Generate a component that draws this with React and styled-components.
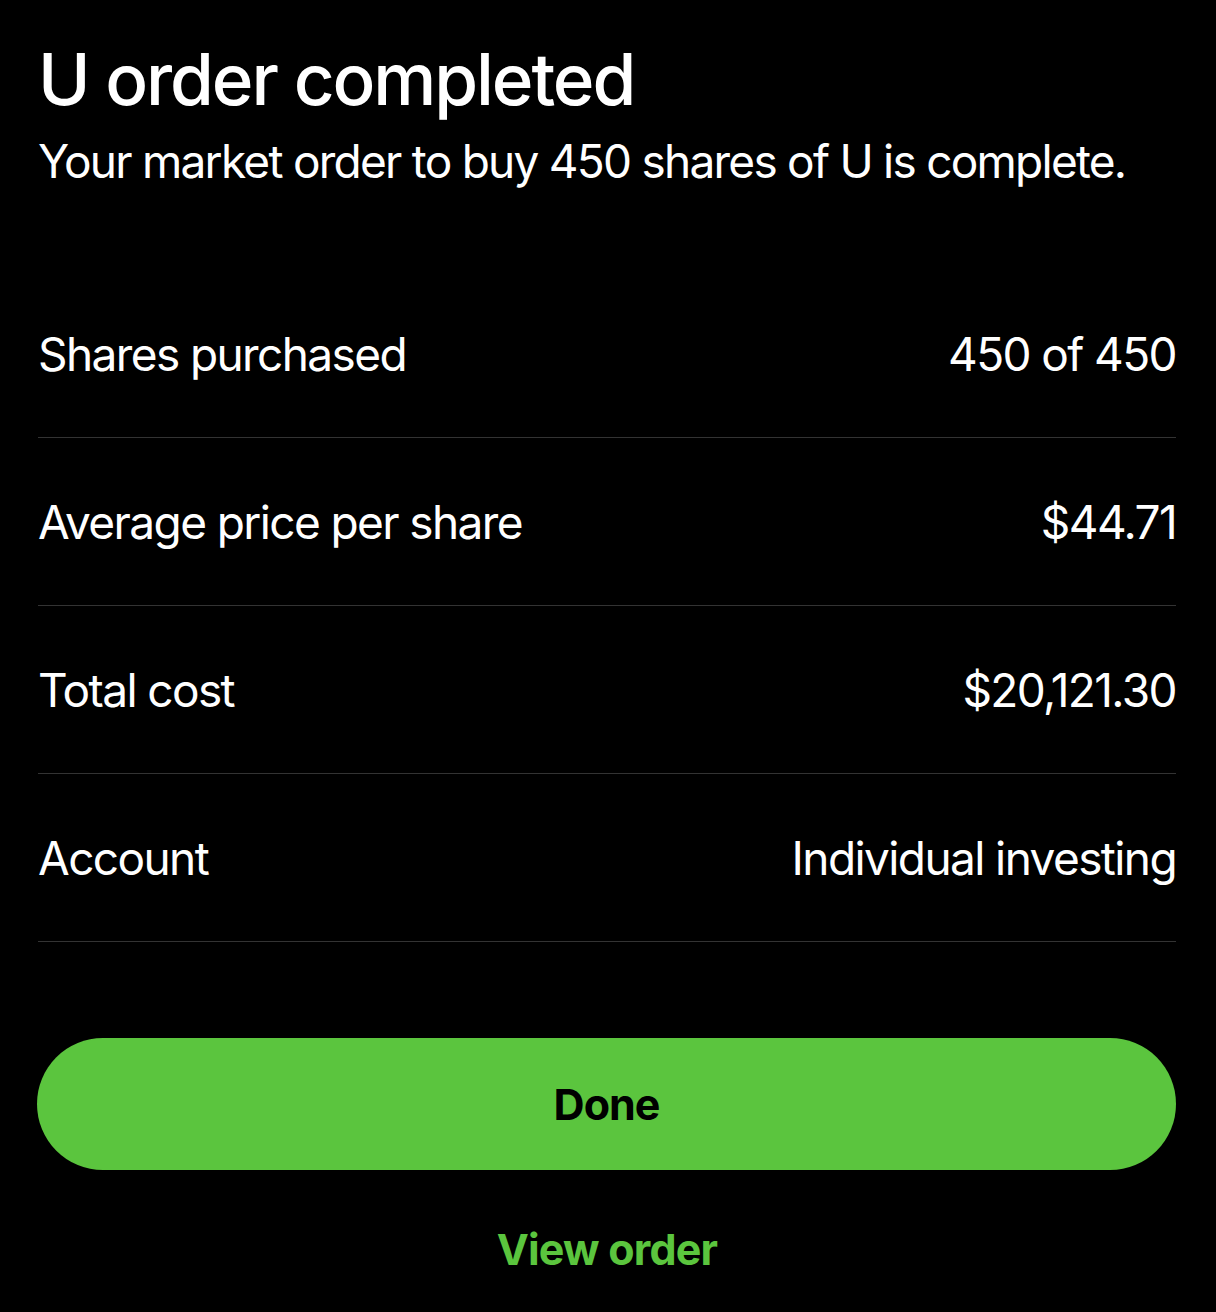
import React from "react";
import styled, { createGlobalStyle } from "styled-components";

const Global = createGlobalStyle`
  html, body { margin: 0; padding: 0; background: #000; }
  body { font-family: Inter, "Noto Sans", sans-serif; color: #fff; }
`;

const Page = styled.div`
  width: 1216px;
  min-height: 1312px;
  box-sizing: border-box;
  background: #000;
  padding: 35px 40px 0 38px;
  display: flex;
  flex-direction: column;
`;

const Title = styled.h1`
  margin: 0;
  font-size: 71px;
  font-weight: 500;
  line-height: 88px;
  letter-spacing: -2.1px;
`;

const Subtitle = styled.p`
  margin: 8px 0 0;
  font-size: 46px;
  font-weight: 400;
  line-height: 60px;
  letter-spacing: -1.75px;
`;

const List = styled.div`
  margin-top: 79px;
  display: flex;
  flex-direction: column;
`;

const Row = styled.div`
  height: 167px;
  display: flex;
  align-items: center;
  justify-content: space-between;
  border-bottom: 1px solid #333;
  font-size: 46px;
  letter-spacing: -1.6px;
`;

const Label = styled.span``;
const Value = styled.span``;

const DoneButton = styled.button`
  margin-top: 96px;
  margin-left: -1px;
  height: 132px;
  border: none;
  border-radius: 66px;
  background: #5bc53e;
  color: #000;
  font-family: Inter, "Noto Sans", sans-serif;
  font-size: 43px;
  font-weight: 700;
  letter-spacing: -1px;
`;

const LinkButton = styled.button`
  margin-top: 52px;
  background: none;
  border: none;
  color: #5bc53e;
  font-family: Inter, "Noto Sans", sans-serif;
  font-size: 43px;
  font-weight: 700;
  letter-spacing: -0.8px;
  align-self: center;
`;

const rows = [
  ["Shares purchased", "450 of 450"],
  ["Average price per share", "$44.71"],
  ["Total cost", "$20,121.30"],
  ["Account", "Individual investing"],
];

export default function App() {
  return (
    <>
      <Global />
      <Page>
        <Title>U order completed</Title>
        <Subtitle>Your market order to buy 450 shares of U is complete.</Subtitle>
        <List>
          {rows.map(([l, v]) => (
            <Row key={l}>
              <Label>{l}</Label>
              <Value>{v}</Value>
            </Row>
          ))}
        </List>
        <DoneButton>Done</DoneButton>
        <LinkButton>View order</LinkButton>
      </Page>
    </>
  );
}
